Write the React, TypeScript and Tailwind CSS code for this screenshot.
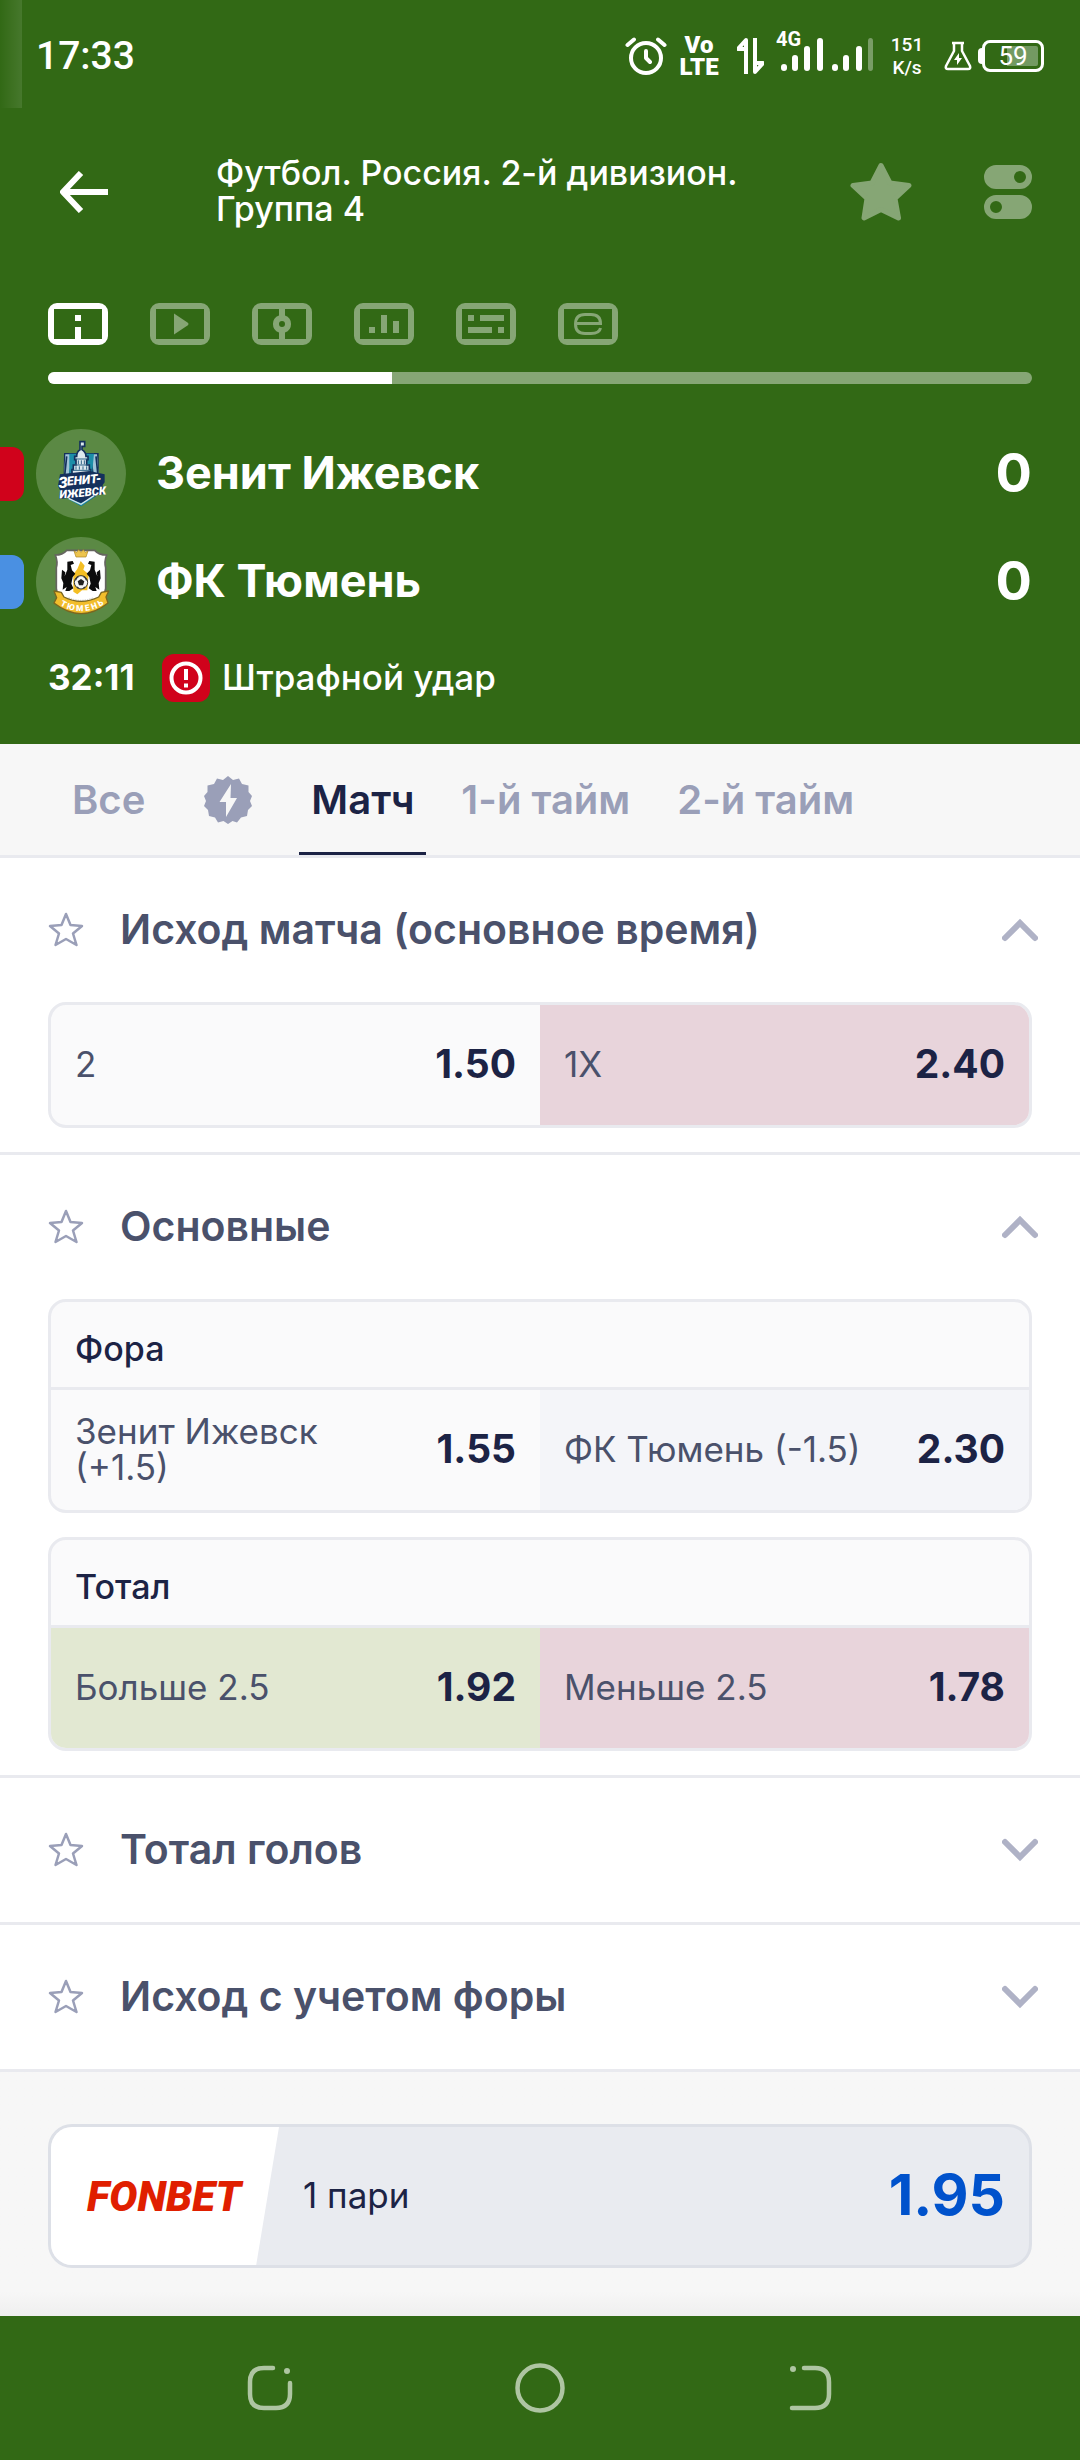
import React, { useState } from "react";

const FRAME = "M9 0H51A9 9 0 0 1 60 9V33A9 9 0 0 1 51 42H9A9 9 0 0 1 0 33V9A9 9 0 0 1 9 0ZM6 6V36H54V6Z";

const views = [
  { label: "Информация", art: <path d="M27 12h6v6h-6zM27 24h6v12h-6z" /> },
  { label: "Видео", art: <path d="M24 10.500L37.500 19.500Q39.500 21 37.500 22.500L24 31.500Z" /> },
  {
    label: "Поле",
    art: <path fillRule="evenodd" d="M27 6h6v6.500A9 9 0 0 1 33 29.500V36h-6V29.500A9 9 0 0 1 27 12.500ZM30 18a3 3 0 1 0 0 6 3 3 0 0 0 0-6Z" />,
  },
  { label: "Статистика", art: <path d="M15 24h6v6h-6zM27 12h6v18h-6zM39 18h6v12h-6z" /> },
  { label: "Текст", art: <path d="M12 12h6v6h-6zM24 12h24v6H24zM12 24h24v6H12zM42 24h6v6h-6z" /> },
  {
    label: "События",
    art: <path fill="none" stroke="currentColor" strokeWidth="3" d="M17.500 20.500H42.500Q42.500 11.500 33 11.500H27Q17.500 11.500 17.500 21Q17.500 30.500 27 30.500H33Q41.500 30.500 42.500 25" />,
  },
];

function StatusBar() {
  return (
    <div className="relative flex h-[108px] items-center justify-between pt-1 pr-9 pl-9">
      <div className="absolute top-0 left-0 h-full w-[22px] bg-linear-to-r from-white/0 to-white/10" />
      <span className="font-[Roboto] text-[39px] font-medium">17:33</span>
      <div className="flex items-center">
        <svg className="mr-3 h-[40px] w-[42px]" viewBox="0 0 42 40" fill="none" stroke="currentColor" strokeWidth="4" strokeLinecap="round" strokeLinejoin="round">
          <circle cx="21" cy="22" r="15" />
          <path d="M21 15V22L25 26M2.500 9L9 3.500M39.500 9L33 3.500" />
        </svg>
        <span className="flex w-[40px] flex-col items-center font-[Roboto] text-[24px] leading-[22px] font-black">
          <span>Vo</span>
          <span>LTE</span>
        </span>
        <svg className="ml-[18px] h-[36px] w-[27px]" viewBox="0 0 27 36" fill="none" stroke="currentColor" strokeWidth="4" strokeLinejoin="round">
          <path d="M9 36V2L1 11H7" />
          <path d="M18 0V34L26 25H20" />
        </svg>
        <svg className="ml-3 h-[58px] w-[98px]" viewBox="0 -4 98 58" fill="currentColor">
          <text x="0" y="15" fontFamily="Roboto" fontSize="20" fontWeight="700">4G</text>
          <rect x="5" y="33" width="6" height="7" rx="3" />
          <rect x="16" y="24" width="6" height="16" rx="3" />
          <rect x="28" y="15" width="6" height="25" rx="3" />
          <rect x="41" y="7" width="6" height="33" rx="3" />
          <rect x="56" y="33" width="6" height="7" rx="3" />
          <rect x="67" y="24" width="6" height="16" rx="3" />
          <rect x="80" y="15" width="6" height="25" rx="3" />
          <rect x="92" y="7" width="5" height="33" rx="3" opacity=".35" />
        </svg>
        <span className="ml-4 flex w-[34px] flex-col items-center font-[Roboto] text-[19px] leading-[23px] font-medium">
          <span>151</span>
          <span>K/s</span>
        </span>
        <svg className="ml-5 h-[30px] w-[28px]" viewBox="0 0 28 30" fill="none" stroke="currentColor" strokeWidth="2.500" strokeLinejoin="round">
          <path d="M8 2H20M10 2V10L2 25Q1 28 4 28H24Q27 28 26 25L18 10V2" />
          <path d="M15 12L10 19H13L13 24L18 17H15Z" fill="currentColor" stroke="none" />
        </svg>
        <span className="ml-[6px] h-4 w-1 rounded-l-full bg-white" />
        <span className="flex h-8 w-[62px] items-center justify-center rounded-lg border-[3px] border-white bg-linear-to-r from-transparent from-40% to-[#739a62] to-40% bg-clip-content p-[3px] font-[Roboto] text-[26px] leading-none">
          59
        </span>
      </div>
    </div>
  );
}

function ZenitCrest() {
  return (
    <svg className="size-[90px]" viewBox="0 0 270 270" aria-hidden="true">
      <path d="M84 72H188V196L135 232L82 196Z" fill="#14305c" />
      <path d="M88 76H108L98 142H84ZM166 76H183L188 142H174Z" fill="#9fc3d6" />
      <path d="M100 74H174L168 136H100Z" fill="#1c8ea8" />
      <path d="M92 82L86 140M180 82L186 140" stroke="#14305c" strokeWidth="5" />
      <path d="M132 38H146V52H138V62Q150 70 150 82H156V92H152V108H160V122H164V140H108V122H112V108H120V92H116V82H122Q122 68 132 62Z" fill="#dce8ee" stroke="#14305c" strokeWidth="5" />
      <path d="M118 90H154M116 108H158M110 124H163M127 94V106M136 94V106M145 94V106M120 112V122M130 112V122M141 112V122M152 112V122" stroke="#2d6387" strokeWidth="3" />
      <path d="M72 136L160 126L206 136V160L200 168L202 196L70 210L72 184L66 170Z" fill="#14305c" />
      <path d="M88 206L135 222L184 198L136 232Z" fill="#1c8ea8" />
      <path d="M98 208L135 226L174 200" fill="none" stroke="#d7e6ed" strokeWidth="4" />
      <g fill="#fff" fontFamily="Roboto" fontStyle="italic" fontWeight="900" transform="rotate(-5 135 170)">
        <text x="68" y="172" fontSize="46">З</text>
        <text x="94" y="166" fontSize="37">ЕНИТ-</text>
        <text x="68" y="203" fontSize="34">ИЖЕВСК</text>
      </g>
    </svg>
  );
}

function TyumenCrest() {
  return (
    <svg className="size-[90px]" viewBox="0 0 270 270" aria-hidden="true">
      <path d="M58 54Q80 54 92 40H176Q188 54 212 54Q204 74 209 92V154Q204 196 168 206H102Q66 198 61 154V92Q66 74 58 54Z" fill="#fff" stroke="#65655f" strokeWidth="5" />
      <path d="M114 42L122 46L128 38L135 46L142 38L148 46L156 42L150 60H120Z" fill="#edc44d" stroke="#a98320" strokeWidth="2" />
      <path d="M134 72L146 86L142 98L158 112L154 160H138L124 172L112 164V112L124 96Z" fill="#f4be24" />
      <path d="M94 74L110 72L114 80L104 84L108 100L118 110L110 120L106 140L112 154L100 162H88L92 150L80 158L82 138L76 124L78 98L88 106L86 118L94 98Z" fill="#0b0b0c" />
      <path d="M176 74L160 72L156 80L166 84L162 100L152 110L160 120L164 140L158 154L170 162H182L178 150L190 158L188 138L194 124L192 98L182 106L184 118L176 98Z" fill="#0b0b0c" />
      <circle cx="135" cy="136" r="20" fill="#f6f6f6" stroke="#333" strokeWidth="3" />
      <path d="M135 126L145 133L141 145H129L125 133Z" fill="#222" />
      <path d="M118 130L124 120L128 119M152 130L146 120L142 119M123 150L128 154M147 150L142 154" fill="none" stroke="#333" strokeWidth="4" />
      <path d="M98 182Q135 198 172 182" fill="none" stroke="#c5c5c5" strokeWidth="3" strokeDasharray="4 3" />
      <path d="M54 162L76 166L84 180Q135 206 188 180L196 166L218 162L210 180L216 198Q136 262 54 198L62 182Z" fill="#f2bd2c" stroke="#7b661f" strokeWidth="4" strokeLinejoin="round" />
      <path id="ribbon" d="M62 199Q136 248 214 196" fill="none" />
      <text fill="#fff" fontFamily="Roboto" fontSize="25" fontWeight="900" textAnchor="middle">
        <textPath href="#ribbon" startOffset="50%">Т Ю М Е Н Ь</textPath>
      </text>
    </svg>
  );
}

function Team({ name, score, tag, crest }: { name: string; score: number; tag: string; crest: React.ReactNode }) {
  return (
    <div className="flex h-[90px] items-center pr-12">
      <span className={`mr-3 h-[54px] w-6 rounded-r-xl ${tag}`} />
      <span className="mr-[30px] size-[90px] rounded-full bg-[#5b8944]">{crest}</span>
      <span className="flex-1 pb-[2px] text-[45px] leading-[54px] font-bold">{name}</span>
      <span className="pb-[2px] text-[54px] leading-none font-bold">{score}</span>
    </div>
  );
}

const STAR = "M18 2L22.500 13L34 14L25 21.500L28.500 33L18 27L7.500 33L11 21.500L2 14L13.500 13Z";

function Section({ title, children }: { title: string; children?: React.ReactNode }) {
  const [open, setOpen] = useState(Boolean(children));
  return (
    <section className="border-b-[3px] border-[#e9eaef] bg-white">
      <div className="flex h-36 items-center pr-[42px] pl-12">
        <button aria-label={`В избранное: ${title}`} className="mr-9">
          <svg className="size-9 text-[#9a9fb8]" viewBox="0 0 36 36" fill="none" stroke="currentColor" strokeWidth="2.500" strokeLinejoin="round">
            <path d={STAR} />
          </svg>
        </button>
        <button aria-expanded={open} onClick={() => setOpen(!open)} className="flex flex-1 items-center justify-between text-left">
          <h2 className="pb-[2px] text-[41px] leading-[48px] font-semibold text-[#4a516b]">{title}</h2>
          <svg className={`h-6 w-9 text-[#afb2c6] ${open ? "" : "rotate-180"}`} viewBox="0 0 36 24" fill="none" stroke="currentColor" strokeWidth="6" strokeLinecap="round">
            <path d="M3 20L18 5L33 20" />
          </svg>
        </button>
      </div>
      {open && children && <div className="flex flex-col gap-6 px-12 pb-6">{children}</div>}
    </section>
  );
}

type Odd = { name: string; value: string; tone: string };

function Market({ title, odds }: { title?: string; odds: Odd[] }) {
  return (
    <div className="overflow-hidden rounded-[18px] border-[3px] border-[#e9eaef] bg-[#fafafb]">
      {title && <h3 className="flex h-[88px] items-center border-b-[3px] border-[#e9eaef] px-6 pt-2 text-[34px] font-medium text-[#1c2345]">{title}</h3>}
      <div className="grid grid-cols-2">
        {odds.map((o) => (
          <button key={o.name} className={`flex h-[120px] items-center justify-between gap-12 px-6 pb-[2px] text-left ${o.tone}`}>
            <span className="text-[35px] leading-9 text-[#4a516b]">{o.name}</span>
            <span className="text-[39px] font-bold text-[#1c2345]">{o.value}</span>
          </button>
        ))}
      </div>
    </div>
  );
}

export default function App() {
  return (
    <div className="flex min-h-screen flex-col bg-[#f7f7f7] font-['Inter',sans-serif]">
      <header className="bg-[#326915] pb-[42px] text-white">
        <StatusBar />
        <div className="flex h-[168px] items-center pr-12 pl-[60px]">
          <button aria-label="Назад">
            <svg className="h-[42px] w-12" viewBox="0 0 48 42" fill="none" stroke="currentColor" strokeWidth="6">
              <path d="M48 21H4M21 2L3 21L21 40" strokeLinejoin="round" />
            </svg>
          </button>
          <h1 className="ml-[108px] w-[560px] pb-[2px] text-[34px] leading-9 font-medium">Футбол. Россия. 2-й дивизион. Группа 4</h1>
          <button aria-label="Избранное" className="ml-auto text-[#86a675]">
            <svg className="size-[62px]" viewBox="0 0 62 62" fill="currentColor" stroke="currentColor" strokeWidth="5" strokeLinejoin="round">
              <path d="M31 4.500L40 22L59 24.500L45 37.500L48.500 57L31 48.500L14 57L17 37.500L3 24.500L22 22Z" />
            </svg>
          </button>
          <button aria-label="Настройки" className="ml-[72px] text-[#86a675]">
            <svg className="h-[54px] w-12" viewBox="0 0 48 54" fill="currentColor" fillRule="evenodd">
              <path d="M12 0H36A12 12 0 0 1 36 24H12A12 12 0 0 1 12 0ZM36 6a6 6 0 1 0 0 12 6 6 0 0 0 0-12Z" />
              <path d="M12 30H36A12 12 0 0 1 36 54H12A12 12 0 0 1 12 30ZM12 36a6 6 0 1 0 0 12 6 6 0 0 0 0-12Z" />
            </svg>
          </button>
        </div>
        <nav className="flex gap-[42px] px-12 pt-[27px]">
          {views.map((v, i) => (
            <button key={v.label} aria-label={v.label} className={i === 0 ? "text-white" : "text-[#86a675]"}>
              <svg className="h-[42px] w-[60px]" viewBox="0 0 60 42" fill="currentColor">
                <path fillRule="evenodd" d={FRAME} />
                {v.art}
              </svg>
            </button>
          ))}
        </nav>
        <div className="mx-12 mt-[27px] h-3 overflow-hidden rounded-[6px] bg-[#86a675]">
          <div className="h-full w-[35%] bg-white" />
        </div>
        <div className="mt-[45px] flex flex-col gap-[18px]">
          <Team name="Зенит Ижевск" score={0} tag="bg-[#d0021b]" crest={<ZenitCrest />} />
          <Team name="ФК Тюмень" score={0} tag="bg-[#4a90e2]" crest={<TyumenCrest />} />
        </div>
        <div className="mt-[27px] flex h-12 items-center px-12 text-[35px] leading-none">
          <span className="w-[90px] pb-[2px] font-bold">32:11</span>
          <span className="mx-3 ml-6 grid size-12 place-items-center rounded-xl bg-[#d0021b]">
            <svg className="size-9" viewBox="0 0 36 36" fill="none" stroke="currentColor" strokeWidth="4">
              <circle cx="18" cy="18" r="14.500" />
              <path d="M18 9V20M18 23.500V27.500" />
            </svg>
          </span>
          <span className="pb-[2px] font-medium">Штрафной удар</span>
        </div>
      </header>

      <nav className="flex h-[114px] gap-[23px] border-b-[3px] border-[#e9eaef] px-[60px] text-[40px] font-semibold text-[#9a9fb8]">
        <button className="border-y-[3px] border-transparent px-3">Все</button>
        <button aria-label="Быстрые ставки" className="px-6">
          <svg className="size-12" viewBox="0 0 48 48">
            <path fill="currentColor" d="M24 0L29 4L35 2.500L38 8L44.500 9.500L44.500 16L48 20L46 25L48 30L44 34L43 40L37 41.500L33 46.500L28.500 45L24 48L19.500 45L14 46.500L11 41.500L5 40L4 34L0 30L2 25L0 20L3.500 16L3.500 9.500L10 8L13 2.500L19 4Z" />
            <path fill="#f7f7f7" d="M27 8L15.500 26H22L22 41L33 22H26.500Z" />
          </svg>
        </button>
        <button aria-current="page" className="border-y-[3px] border-t-transparent border-b-[#1c2345] px-3 text-[#1c2345]">Матч</button>
        <button className="border-y-[3px] border-transparent px-3">1-й тайм</button>
        <button className="border-y-[3px] border-transparent px-3">2-й тайм</button>
      </nav>

      <main>
        <Section title="Исход матча (основное время)">
          <Market
            odds={[
              { name: "2", value: "1.50", tone: "" },
              { name: "1X", value: "2.40", tone: "bg-[#e8d4db]" },
            ]}
          />
        </Section>
        <Section title="Основные">
          <Market
            title="Фора"
            odds={[
              { name: "Зенит Ижевск (+1.5)", value: "1.55", tone: "" },
              { name: "ФК Тюмень (-1.5)", value: "2.30", tone: "bg-[#f4f5f9]" },
            ]}
          />
          <Market
            title="Тотал"
            odds={[
              { name: "Больше 2.5", value: "1.92", tone: "bg-[#e2e8d2]" },
              { name: "Меньше 2.5", value: "1.78", tone: "bg-[#e8d4db]" },
            ]}
          />
        </Section>
        <Section title="Тотал голов" />
        <Section title="Исход с учетом форы" />
      </main>

      <div className="flex-1 bg-linear-to-b from-[#f7f7f7] from-90% to-[#efefef] px-12 pt-[52px] pb-12">
        <a href="#bet" className="flex h-36 items-stretch overflow-hidden rounded-3xl border-[3px] border-[#dde0e7] bg-[#e9ebf0]">
          <span className="flex w-[228px] items-center bg-white pl-9 font-[Roboto] text-[42px] font-black text-[#e01f00] italic [clip-path:polygon(0_0,100%_0,90%_100%,0_100%)]">FONBET</span>
          <span className="flex flex-1 items-center justify-between px-6 pb-[2px]">
            <span className="text-[35px] text-[#1c2345]">1 пари</span>
            <span className="text-[57px] font-bold text-[#0052cc]">1.95</span>
          </span>
        </a>
      </div>

      <nav className="grid h-36 grid-cols-3 place-items-center bg-[#326915] px-[12.5%] text-[#aec5a2]">
        <button aria-label="Недавние">
          <svg className="size-[50px]" viewBox="0 0 50 50" fill="none" stroke="currentColor" strokeWidth="4.500" strokeLinecap="round">
            <path d="M28 5H19Q5 5 5 19V31Q5 45 19 45H31Q45 45 45 31V20" />
            <circle cx="42" cy="8" r="3" fill="currentColor" stroke="none" />
          </svg>
        </button>
        <button aria-label="Домой">
          <svg className="size-[50px]" viewBox="0 0 50 50" fill="none" stroke="currentColor" strokeWidth="4.500">
            <circle cx="25" cy="25" r="22.500" />
          </svg>
        </button>
        <button aria-label="Назад">
          <svg className="size-[50px]" viewBox="0 0 50 50" fill="none" stroke="currentColor" strokeWidth="4.500" strokeLinecap="round">
            <path d="M19 5H30Q44 5 44 19V31Q44 45 30 45H7" />
            <circle cx="8" cy="6" r="3" fill="currentColor" stroke="none" />
          </svg>
        </button>
      </nav>
    </div>
  );
}
